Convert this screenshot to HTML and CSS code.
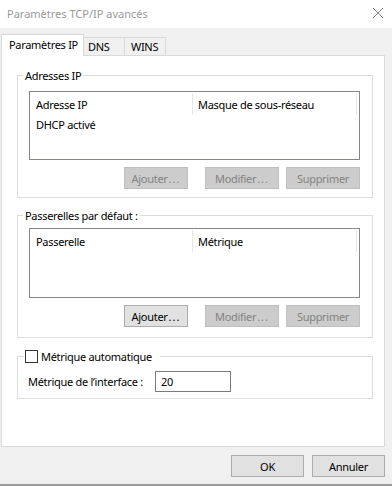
FILE: index.html
```html
<!DOCTYPE html>
<html lang="fr">
<head>
  <meta charset="UTF-8">
  <title>Paramètres TCP/IP avancés</title>
  <link rel="stylesheet" href="styles.css">
</head>
<body>
  <div class="window">
    <div class="titlebar">
      <span class="title">Paramètres TCP/IP avancés</span>
      <svg class="close" width="12" height="12" viewBox="0 0 12 12">
        <path d="M1 1 L11 11 M11 1 L1 11" stroke="#8a8a8a" stroke-width="1" fill="none"/>
      </svg>
    </div>

    <div class="content">
      <div class="tabs">
        <div class="tab active">Paramètres IP</div>
        <div class="tab tab-dns">DNS</div>
        <div class="tab tab-wins">WINS</div>
      </div>

      <div class="panel">
        <!-- Adresses IP -->
        <div class="group group-ip">
          <span class="group-title">Adresses IP</span>
          <div class="listbox">
            <div class="list-head">
              <div class="col col1">Adresse IP</div>
              <div class="col col2">Masque de sous-réseau</div>
            </div>
            <div class="list-row">DHCP activé</div>
          </div>
          <div class="actions">
            <button class="btn btn-add" disabled>Ajouter<span class="dots">...</span></button>
            <button class="btn btn-edit" disabled>Modifier<span class="dots">...</span></button>
            <button class="btn btn-del" disabled>Supprimer</button>
          </div>
        </div>

        <!-- Passerelles -->
        <div class="group group-gw">
          <span class="group-title">Passerelles par défaut :</span>
          <div class="listbox">
            <div class="list-head">
              <div class="col col1">Passerelle</div>
              <div class="col col2">Métrique</div>
            </div>
          </div>
          <div class="actions">
            <button class="btn btn-add">Ajouter<span class="dots">...</span></button>
            <button class="btn btn-edit" disabled>Modifier<span class="dots">...</span></button>
            <button class="btn btn-del" disabled>Supprimer</button>
          </div>
        </div>

        <!-- Métrique -->
        <div class="group group-metric">
          <label class="group-title check-title"><span class="checkbox"></span>Métrique automatique</label>
          <div class="metric-row">
            <span class="metric-label">Métrique de l’interface :</span>
            <div class="textbox">20</div>
          </div>
        </div>
      </div>

      <div class="footer">
        <button class="btn btn-dialog">OK</button>
        <button class="btn btn-dialog">Annuler</button>
      </div>
    </div>
  </div>
</body>
</html>
```
FILE: styles.css
```css
body {
  margin: 0;
  background: #f0f0f0;
  color: #000;
  font-family: "Noto Sans", "Open Sans", sans-serif;
  font-size: 11px;
  letter-spacing: -0.3px;
}
.window {
  width: 392px;
  height: 486px;
  box-sizing: border-box;
  border-bottom: 2px solid #9a9a9a;
  display: flex;
  flex-direction: column;
}
.titlebar {
  height: 28px;
  background: #fff;
  display: flex;
  align-items: center;
  justify-content: space-between;
  padding: 0 8px 2px 7px;
  box-sizing: border-box;
  flex-shrink: 0;
}
.title {
  color: #999;
  font-size: 11px;
  letter-spacing: 0;
}
.content {
  padding: 6px 7px 0 1px;
  flex: 1;
}

/* onglets */
.tabs {
  display: flex;
  align-items: flex-end;
  height: 21px;
}
.tab {
  height: 18px;
  line-height: 17px;
  box-sizing: border-box;
  border: 1px solid #d9d9d9;
  border-bottom: none;
  background: #f0f0f0;
  margin-left: -1px;
}
.tab-dns {
  width: 42px;
  padding-left: 4px;
}
.tab-wins {
  width: 42px;
  padding-left: 6px;
}
.tab.active {
  height: 22px;
  line-height: 20px;
  background: #fff;
  margin-left: 0;
  margin-bottom: -1px;
  width: 83px;
  padding: 0 0 0 7px;
  position: relative;
  z-index: 1;
}
.panel {
  height: 392px;
  box-sizing: border-box;
  border: 1px solid #d9d9d9;
  background: #fff;
  padding: 19px 11px 0 15px;
}

/* cadres */
.group {
  border: 1px solid #dcdcdc;
  box-sizing: border-box;
  height: 123px;
}
.group-gw {
  margin-top: 17px;
}
.group-metric {
  margin-top: 18px;
  height: 43px;
}
.group-title {
  display: flex;
  align-items: center;
  width: fit-content;
  height: 15px;
  line-height: 15px;
  margin: -8px 0 0 5px;
  padding: 0 2px;
  background: #fff;
}
.check-title {
  padding: 0 8px 0 1px;
  margin-left: 6px;
}
.checkbox {
  width: 13px;
  height: 13px;
  box-sizing: border-box;
  border: 1px solid #333;
  background: #fff;
  margin-right: 3px;
}

/* listes */
.listbox {
  width: 331px;
  height: 69px;
  box-sizing: border-box;
  border: 1px solid #828790;
  margin: 8px 0 0 11px;
  background: #fff;
}
.group-gw .listbox {
  margin-top: 5px;
  height: 70px;
}
.list-head {
  display: flex;
  height: 23px;
}
.col {
  line-height: 23px;
  padding-left: 6px;
  border-right: 1px solid #e5e5e5;
  box-sizing: border-box;
  margin-top: 1px;
}
.col1 {
  width: 163px;
}
.col2 {
  width: 164px;
  padding-left: 5px;
}
.list-row {
  height: 20px;
  line-height: 20px;
  padding-left: 6px;
}

/* boutons */
.actions {
  display: flex;
  justify-content: flex-end;
  width: 331px;
  margin: 7px 0 0 11px;
}
.btn {
  height: 22px;
  box-sizing: border-box;
  border: 1px solid #adadad;
  background: #e1e1e1;
  color: #000;
  font-family: inherit;
  font-size: 11px;
  letter-spacing: -0.3px;
  padding: 0;
}
.btn .dots {
  letter-spacing: 1px;
  margin-left: 1px;
}
.btn:disabled {
  background: #cccccc;
  border-color: #bfbfbf;
  color: #838383;
}
.btn-add {
  width: 64px;
}
.btn-edit {
  width: 74px;
  margin-left: 17px;
}
.btn-del {
  width: 74px;
  margin-left: 7px;
}

/* métrique */
.metric-row {
  display: flex;
  align-items: center;
  margin: 7px 0 0 10px;
}
.metric-label {
  width: 127px;
}
.textbox {
  width: 76px;
  height: 21px;
  line-height: 19px;
  box-sizing: border-box;
  border: 1px solid #7a7a7a;
  padding-left: 5px;
  background: #fff;
}

/* pied */
.footer {
  display: flex;
  justify-content: flex-end;
  gap: 8px;
  margin-top: 8px;
}
.btn-dialog {
  width: 73px;
}
```
